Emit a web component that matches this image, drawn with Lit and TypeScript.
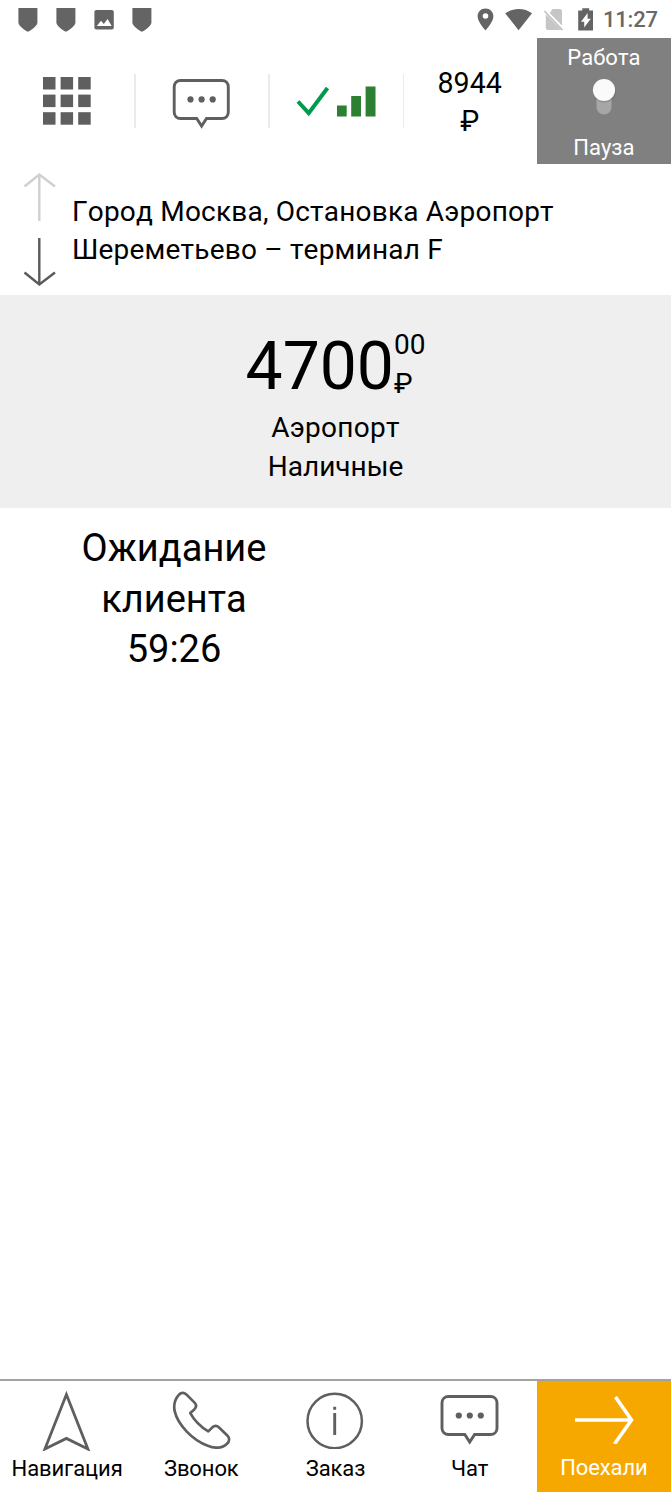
import { LitElement, html, css, svg } from "lit";
import { customElement } from "lit/decorators.js";

const shield = html`<svg class="shield" width="20" height="26" viewBox="0 0 20 26">
  <path d="M.4 1H19.4V15.2C19.4 18.4 15.5 21.6 9.9 24.8C4.3 21.6.4 18.4.4 15.2Z" fill="#646464" />
</svg>`;

const bubble = html`<svg width="60" height="60" viewBox="0 0 60 60" fill="none">
  <path
    d="M8.5 9.5H50C53.7 9.5 56.3 12.3 56.3 16V41C56.3 44.7 53.7 47.5 50 47.5H34.5L29.6 55L24.7 47.5H8.5C4.8 47.5 2.2 44.7 2.2 41V16C2.2 12.3 4.8 9.5 8.5 9.5Z"
    stroke="#5f5f5f" stroke-width="2.9" />
  ${[18.5, 29.6, 40.7].map((x) => svg`<circle cx=${x} cy="28.4" r="3.1" fill="#5f5f5f" />`)}
</svg>`;

@customElement("app-root")
export class AppRoot extends LitElement {
  static styles = css`
    :host {
      display: flex;
      flex-direction: column;
      width: 671px;
      height: 1492px;
      overflow: hidden;
      background: #fff;
      color: #000;
      font-family: Roboto, "Noto Sans", sans-serif;
      font-size: 28px;
      font-kerning: none;
    }
    svg { display: block; flex: none; }
    .status {
      height: 38px;
      display: flex;
      align-items: center;
      justify-content: space-between;
      padding: 1px 12px 0 18px;
      box-sizing: border-box;
    }
    .group { display: flex; align-items: center; }
    .left { gap: 18px; }
    .clock {
      width: 56px;
      margin-left: 10px;
      font-size: 22px;
      line-height: 26px;
      font-weight: 500;
      letter-spacing: -0.2px;
      color: #686868;
      white-space: nowrap;
    }
    .header {
      height: 126px;
      display: grid;
      grid-template-columns: repeat(5, 1fr);
    }
    .cell {
      display: flex;
      align-items: center;
      justify-content: center;
    }
    .rule {
      width: 1.5px;
      height: 54px;
      margin-right: -1.5px;
      background: #ebebeb;
    }
    .ruled { justify-content: space-between; }
    .ruled > .mark { flex: 1; display: flex; justify-content: center; align-items: center; }
    .chat { padding-left: 1px; }
    .signal { gap: 7px; padding-left: 2px; }
    .balance { text-align: center; line-height: 38px; font-size: 28.6px; padding-top: 1px; }
    .balance div { width: 100px; }
    .shift {
      background: #808080;
      color: #fff;
      display: flex;
      flex-direction: column;
      align-items: center;
      justify-content: space-between;
      font-size: 22px;
      line-height: 26px;
      padding: 7px 0 3px;
      box-sizing: border-box;
    }
    .shift svg { margin-bottom: 12px; }
    .address {
      height: 131px;
      display: flex;
      align-items: center;
      padding-left: 23px;
      box-sizing: border-box;
      gap: 15px;
    }
    .address p {
      margin: 0;
      padding-top: 2px;
      line-height: 37.5px;
      letter-spacing: 0.2px;
      white-space: nowrap;
    }
    .price {
      height: 213px;
      padding-top: 31px;
      box-sizing: border-box;
      background: #efefef;
      display: flex;
      flex-direction: column;
      align-items: center;
      line-height: 38.5px;
    }
    .sum { display: flex; height: 83px; }
    .whole { font-size: 66px; line-height: 81px; }
    .tariff { letter-spacing: 0.3px; }
    .waiting {
      width: 348px;
      padding-top: 15px;
      flex: 1;
      text-align: center;
      font-size: 38px;
      line-height: 50.6px;
      box-sizing: border-box;
    }
    .footer {
      height: 113px;
      border-top: 2px solid #a2a2a2;
      box-sizing: border-box;
      display: grid;
      grid-template-columns: repeat(5, 1fr);
      font-size: 22px;
      line-height: 26px;
    }
    .tab {
      display: flex;
      flex-direction: column;
      align-items: center;
      white-space: nowrap;
    }
    .tab span { letter-spacing: -0.1px; }
    .pic { height: 75px; display: flex; align-items: center; }
    .go { background: #f7a800; color: #fff; }
    .go .pic { height: 74px; }
  `;

  render() {
    return html`
      <div class="status">
        <div class="group left">
          ${shield}${shield}
          <svg width="20" height="20" viewBox="0 0 20 20">
            <rect x=".4" width="19.4" height="19.4" rx="2" fill="#646464" />
            <path d="M2.8 16L7 10.8L9.8 13.9L13.6 9L17.6 16Z" fill="#fff" />
          </svg>
          ${shield}
        </div>
        <div class="group">
          <svg width="17" height="24" viewBox="0 0 17 24">
            <path fill-rule="evenodd" fill="#646464"
              d="M8.5 .5C4 .5 .6 3.9.6 8.3C.6 14.2 8.5 22.5 8.5 22.5S16.4 14.2 16.4 8.3C16.4 3.9 13 .5 8.5 .5ZM8.5 5.2A2.8 2.8 0 1 1 8.5 10.8A2.8 2.8 0 1 1 8.5 5.2Z" />
          </svg>
          <svg width="50" height="24" viewBox="0 0 50 24">
            <path d="M11.2 5.3C18.8-.4 30.5-.4 38 5.3L24.6 22.3Z" fill="#646464" />
          </svg>
          <svg width="22" height="24" viewBox="0 0 22 24">
            <path d="M8.5 1H16Q18 1 18 3V17.6L5.8 5.2ZM1.8 6.2L17.6 22H3.8Q1.8 22 1.8 20Z" fill="#c6c6c6" />
            <path d="M.3 3L18.6 22" stroke="#c0c0c0" stroke-width="1.6" />
          </svg>
          <svg width="27" height="24" viewBox="0 0 27 24">
            <path d="M16.3 .2H23.2V2.4H27V22.4H12.2V2.4H16.3Z" fill="#646464" />
            <path d="M21.6 5V10.8H24.8L18.2 19.5V13.8H15Z" fill="#fff" />
          </svg>
          <span class="clock">11:27</span>
        </div>
      </div>
      <div class="header">
        <div class="cell ruled">
          <div class="mark">
            <svg width="48" height="48" viewBox="0 0 48 48" fill="#5f5f5f">
              ${[0, 17.6, 35.2].map((y) =>
                [0, 17.6, 35.2].map((x) => svg`<rect x=${x} y=${y} width="12.5" height="12.5" />`)
              )}
            </svg>
          </div>
          <span class="rule"></span>
        </div>
        <div class="cell ruled"><div class="mark chat">${bubble}</div><span class="rule"></span></div>
        <div class="cell ruled">
          <div class="mark signal">
            <svg width="34" height="32" viewBox="0 0 34 32" fill="none">
              <path d="M2 16.5L12.7 28.2L31.5 3" stroke="#009a4c" stroke-width="4" />
            </svg>
            <svg width="39" height="32" viewBox="0 0 39 32" fill="#2d7f31">
              <path d="M0 20.5H9.7V31.5H0ZM14.2 11H24V31.5H14.2ZM28.6 1.5H38.5V31.5H28.6Z" />
            </svg>
          </div>
          <span class="rule"></span>
        </div>
        <div class="cell balance"><div>8944<br />₽</div></div>
        <div class="shift">
          <span>Работа</span>
          <svg width="30" height="44" viewBox="0 0 30 44">
            <rect x="7.5" y="12" width="15" height="27.5" rx="7.5" fill="#a6a6a6" />
            <circle cx="15.4" cy="16.2" r="11.3" fill="#000" opacity=".15" />
            <circle cx="15" cy="15" r="11.1" fill="#fafafa" />
          </svg>
          <span>Пауза</span>
        </div>
      </div>
      <div class="address">
        <svg width="34" height="116" viewBox="0 0 34 116" fill="none" stroke-width="2.4">
          <path d="M16.3 49V2.5M1.5 14.5L16.3 2.5L32 14.5" stroke="#d0d0d0" />
          <path d="M16.3 66V112.5M1.5 100.5L16.3 112.5L32 100.5" stroke="#5a5a5a" />
        </svg>
        <p>Город Москва, Остановка Аэропорт<br />Шереметьево – терминал F</p>
      </div>
      <div class="price">
        <div class="sum">
          <span class="whole">4700</span>
          <span>00<br />₽</span>
        </div>
        <div class="tariff">Аэропорт</div>
        <div>Наличные</div>
      </div>
      <div class="waiting">Ожидание<br />клиента<br />59:26</div>
      <div class="footer">
        <div class="tab">
          <div class="pic">
            <svg width="52" height="64" viewBox="0 0 52 64" fill="none">
              <path d="M25.4 7.5L46.9 62L25.4 51.4L3.9 62Z" stroke="#5f5f5f" stroke-width="2.8" />
            </svg>
          </div>
          <span>Навигация</span>
        </div>
        <div class="tab">
          <div class="pic">
            <svg width="60" height="60" viewBox="0 0 60 60" fill="none">
              <path transform="translate(.8 .9)"
                d="M7 5C9 2.5 12 2.2 14.5 4.5L23 13C25 15.2 24.5 17.5 22.5 19.5L18.5 23.2C22.5 30.5 29 37 36.5 41.5L40.3 37.7C42.5 35.6 45 35.4 47 37.4L55.5 45.5C58 48.2 58 51.5 55 54C50.5 58 43.5 58.8 36 55.8C21 50.5 6 35 2.8 21C1.6 14.5 3 9.5 7 5Z"
                stroke="#5f5f5f" stroke-width="2.7" stroke-linejoin="round" />
            </svg>
          </div>
          <span>Звонок</span>
        </div>
        <div class="tab">
          <div class="pic">
            <svg width="60" height="60" viewBox="0 0 60 60" fill="none">
              <circle cx="29.7" cy="32" r="27.2" stroke="#5f5f5f" stroke-width="2.5" />
              <path d="M29.7 17.8V20.8M29.7 24V46" stroke="#5f5f5f" stroke-width="2.9" />
            </svg>
          </div>
          <span>Заказ</span>
        </div>
        <div class="tab">
          <div class="pic">
            <svg width="60" height="60" viewBox="0 0 60 60" fill="none">
              <path
                d="M8.5 7.5H50.5C54.2 7.5 57 10.3 57 14V39.2C57 42.9 54.2 45.5 50.5 45.5H34.6L29.7 53L24.8 45.5H8.5C4.8 45.5 2 42.9 2 39.2V14C2 10.3 4.8 7.5 8.5 7.5Z"
                stroke="#5f5f5f" stroke-width="2.9" />
              ${[18.8, 29.8, 40.8].map((x) => svg`<circle cx=${x} cy="26.5" r="3.1" fill="#5f5f5f" />`)}
            </svg>
          </div>
          <span>Чат</span>
        </div>
        <div class="tab go">
          <div class="pic">
            <svg width="60" height="52" viewBox="0 0 60 52" fill="none">
              <path d="M1 28H57M41.5 5L57.5 28L40.5 52" stroke="#fff" stroke-width="3.6" />
            </svg>
          </div>
          <span>Поехали</span>
        </div>
      </div>
    `;
  }
}
